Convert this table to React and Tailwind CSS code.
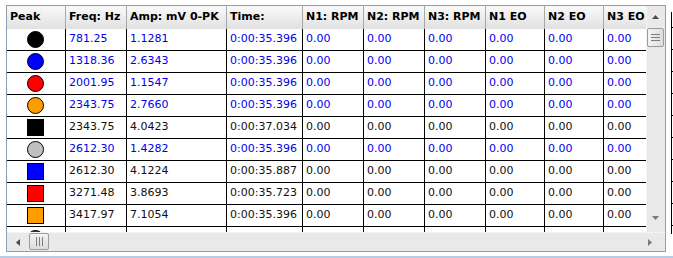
const columns = [
  { label: 'Peak', w: 'w-[59px]' },
  { label: 'Freq: Hz', w: 'w-[61px]' },
  { label: 'Amp: mV 0-PK', w: 'w-[100px]' },
  { label: 'Time:', w: 'w-[76px]' },
  { label: 'N1: RPM', w: 'w-[61px]' },
  { label: 'N2: RPM', w: 'w-[61px]' },
  { label: 'N3: RPM', w: 'w-[61px]' },
  { label: 'N1 EO', w: 'w-[59px]' },
  { label: 'N2 EO', w: 'w-[59px]' },
  { label: 'N3 EO', w: 'w-[59px]' },
];

const rows = [
  { shape: 'circle', color: 'bg-black', freq: '781.25', amp: '1.1281', time: '0:00:35.396', blue: true },
  { shape: 'circle', color: 'bg-[#0000ff]', freq: '1318.36', amp: '2.6343', time: '0:00:35.396', blue: true },
  { shape: 'circle', color: 'bg-[#ff0000]', freq: '2001.95', amp: '1.1547', time: '0:00:35.396', blue: true },
  { shape: 'circle', color: 'bg-[#ff9c00]', freq: '2343.75', amp: '2.7660', time: '0:00:35.396', blue: true },
  { shape: 'square', color: 'bg-black', freq: '2343.75', amp: '4.0423', time: '0:00:37.034', blue: false },
  { shape: 'circle', color: 'bg-[#c0c0c0]', freq: '2612.30', amp: '1.4282', time: '0:00:35.396', blue: true },
  { shape: 'square', color: 'bg-[#0000ff]', freq: '2612.30', amp: '4.1224', time: '0:00:35.887', blue: false },
  { shape: 'square', color: 'bg-[#ff0000]', freq: '3271.48', amp: '3.8693', time: '0:00:35.723', blue: false },
  { shape: 'square', color: 'bg-[#ff9c00]', freq: '3417.97', amp: '7.1054', time: '0:00:35.396', blue: false },
];

function Marker({ shape, color }) {
  return (
    <div
      className={
        (shape === 'circle' ? 'rounded-full ' : '') +
        'w-[17px] h-[17px] border border-black ' +
        color
      }
    />
  );
}

function Grip({ vertical }) {
  return vertical ? (
    <svg width="9" height="7" viewBox="0 0 9 7">
      <path d="M0 0.5H9M0 3.5H9M0 6.5H9" stroke="#7c7c7c" />
    </svg>
  ) : (
    <svg width="7" height="9" viewBox="0 0 7 9">
      <path d="M0.5 0V9M3.5 0V9M6.5 0V9" stroke="#7c7c7c" />
    </svg>
  );
}

function Arrow({ dir }) {
  const d = {
    up: 'M0 4L3.5 0L7 4Z',
    down: 'M0 0L3.5 4L7 0Z',
    left: 'M4 0L0 3.5L4 7Z',
    right: 'M0 0L4 3.5L0 7Z',
  }[dir];
  const vert = dir === 'up' || dir === 'down';
  return (
    <svg width={vert ? 7 : 4} height={vert ? 4 : 7} viewBox={vert ? '0 0 7 4' : '0 0 4 7'}>
      <path d={d} fill={dir === 'up' || dir === 'left' ? '#4a4a4a' : '#7a7a7a'} />
    </svg>
  );
}

export default function App() {
  return (
    <div className="w-[673px] h-[258px] bg-white overflow-hidden font-['DejaVu_Sans',sans-serif] flex flex-col">
      <div className="flex pt-[5px] pl-[6px]">
        {/* grid window */}
        <div className="w-[660px] h-[247px] border border-[#8d9fb4] flex flex-col">
          <div className="flex h-[226px]">
            <div className="w-[639px] overflow-hidden">
              <div className="flex h-[23px] w-max bg-linear-to-b from-[#f9f9f9] to-[#e1e1e1]">
                {columns.map((c) => (
                  <div
                    key={c.label}
                    className={c.w + ' shrink-0 border-r border-[#a9a9a9] flex items-center pl-[3px] text-[11px] font-bold text-black whitespace-nowrap overflow-hidden'}
                  >
                    {c.label}
                  </div>
                ))}
              </div>
              {rows.map((r, i) => (
                <div
                  key={i}
                  className={
                    'flex h-[22px] w-max border-b border-black text-[11px] ' +
                    (r.blue ? 'text-[#0000f0]' : 'text-[#101010]')
                  }
                >
                  <div className={columns[0].w + ' shrink-0 border-r border-black flex items-center justify-center pr-[1px]'}>
                    <Marker shape={r.shape} color={r.color} />
                  </div>
                  {[r.freq, r.amp, r.time, '0.00', '0.00', '0.00', '0.00', '0.00', '0.00'].map((v, j) => (
                    <div
                      key={j}
                      className={columns[j + 1].w + ' shrink-0 border-r border-black flex items-center pl-[3px] whitespace-nowrap'}
                    >
                      {v}
                    </div>
                  ))}
                </div>
              ))}
              {/* partly visible next row */}
              <div className="flex h-[22px] w-max">
                <div className={columns[0].w + ' shrink-0 border-r border-black flex items-center justify-center pr-[1px]'}>
                  <Marker shape="circle" color="bg-[#404040]" />
                </div>
                {columns.slice(1).map((c) => (
                  <div key={c.label} className={c.w + ' shrink-0 border-r border-black'} />
                ))}
              </div>
            </div>
            {/* vertical scrollbar */}
            <div className="w-[19px] bg-[#e9e9e9] border-l border-[#f4f4f4] flex flex-col">
              <div className="h-[22px] flex items-center justify-center pr-[1px]">
                <Arrow dir="up" />
              </div>
              <div className="h-[19px] w-[17px] rounded-[2px] border border-[#9c9c9c] bg-linear-to-r from-[#f4f4f4] to-[#dcdcdc] flex items-center justify-center">
                <Grip vertical />
              </div>
              <div className="flex-1" />
              <div className="h-[24px] flex items-center justify-center pr-[1px] pb-[4px]">
                <Arrow dir="down" />
              </div>
            </div>
          </div>
          {/* horizontal scrollbar */}
          <div className="flex h-[19px] bg-[#e9e9e9] border-t border-[#f4f4f4]">
            <div className="w-[22px] flex items-center justify-center">
              <Arrow dir="left" />
            </div>
            <div className="w-[20px] h-[17px] rounded-[2px] border border-[#9c9c9c] bg-linear-to-b from-[#f4f4f4] to-[#dcdcdc] flex items-center justify-center">
              <Grip />
            </div>
            <div className="flex-1" />
            <div className="w-[26px] flex items-center justify-center pr-[4px]">
              <Arrow dir="right" />
            </div>
          </div>
        </div>
        {/* edge of neighbouring grid */}
        <div className="ml-[5px] mt-[7px] w-[2px] h-[222px] border-l border-black flex flex-col">
          <div className="h-[16px] border-b border-black" />
          {Array.from({ length: 9 }).map((_, i) => (
            <div key={i} className="h-[22px] border-b border-black" />
          ))}
        </div>
      </div>
      <div className="mt-[4px] h-[3px] bg-[#b8cde3]" />
    </div>
  );
}
